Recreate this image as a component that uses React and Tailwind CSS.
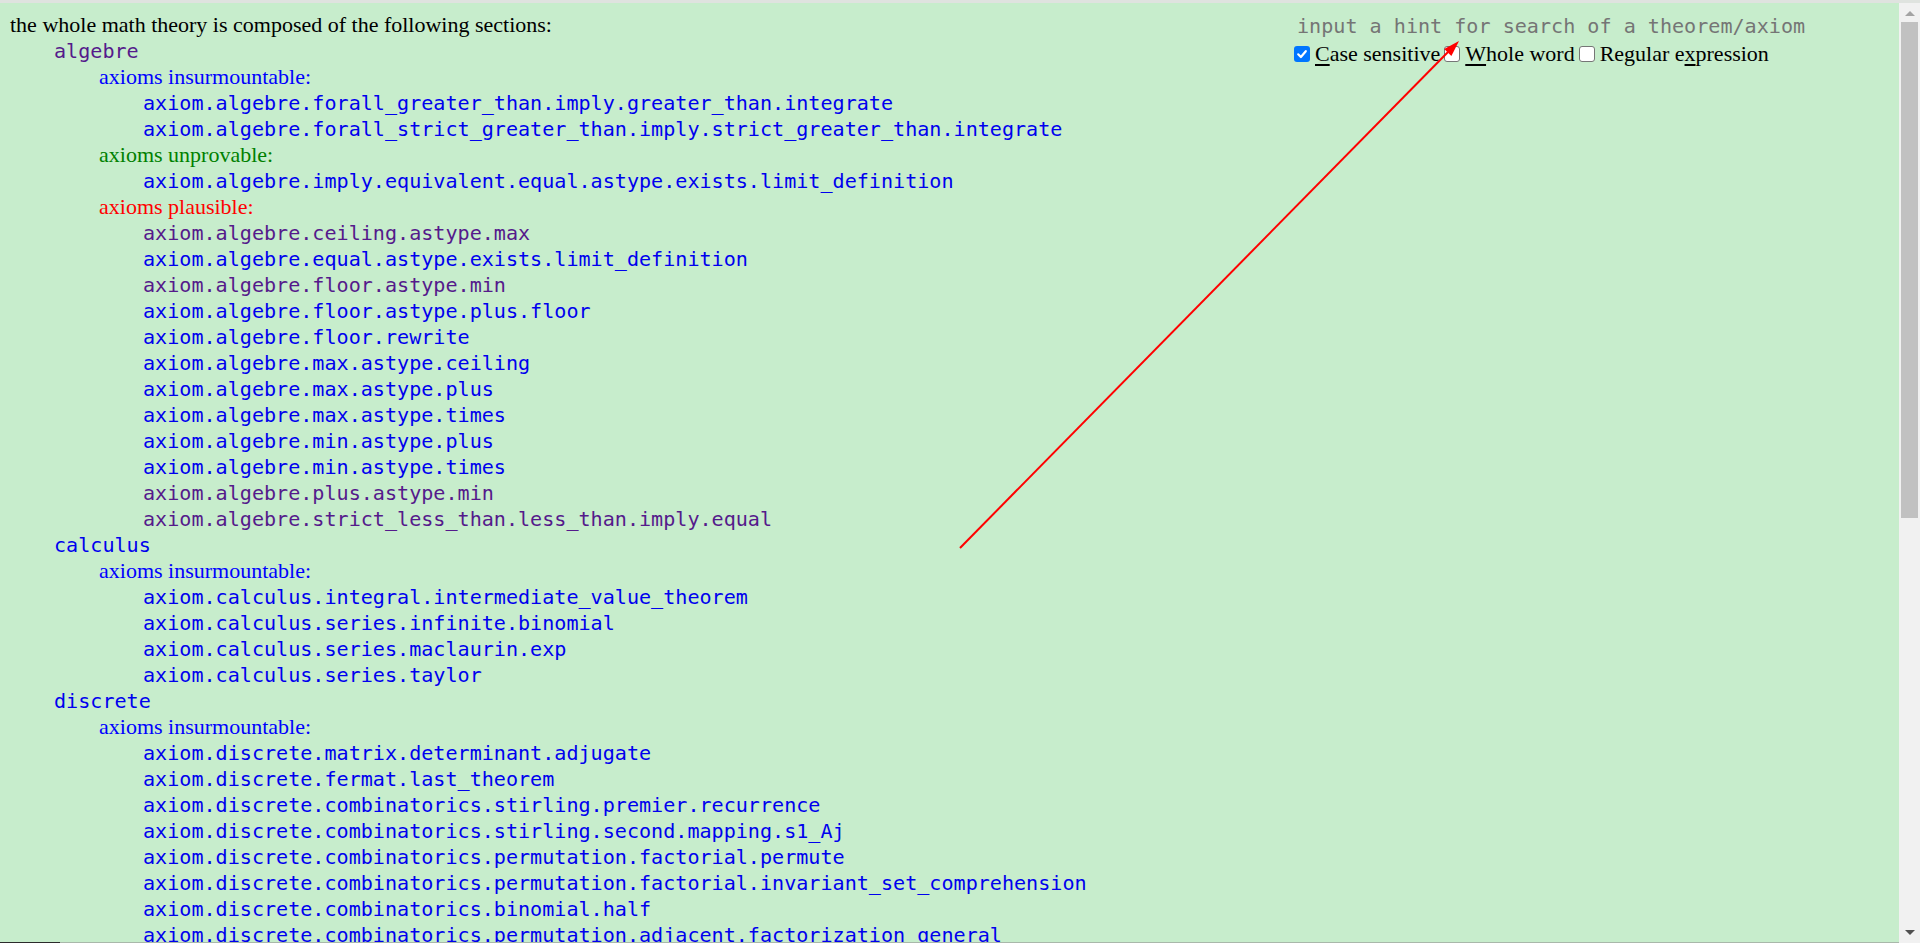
import React from "react";

const MONO = "font-['DejaVu_Sans_Mono',monospace] text-[20.1px]";
const SERIF = "font-['Liberation_Serif',serif] text-[22px]";

const BLUE = "text-[#0000ee]";
const PURPLE = "text-[#551a8b]";

const sections = [
  {
    name: "algebre",
    visited: true,
    groups: [
      {
        label: "axioms insurmountable:",
        color: "text-[#0000ff]",
        items: [
          ["axiom.algebre.forall_greater_than.imply.greater_than.integrate", false],
          ["axiom.algebre.forall_strict_greater_than.imply.strict_greater_than.integrate", false],
        ],
      },
      {
        label: "axioms unprovable:",
        color: "text-[#008000]",
        items: [["axiom.algebre.imply.equivalent.equal.astype.exists.limit_definition", false]],
      },
      {
        label: "axioms plausible:",
        color: "text-[#ff0000]",
        items: [
          ["axiom.algebre.ceiling.astype.max", true],
          ["axiom.algebre.equal.astype.exists.limit_definition", false],
          ["axiom.algebre.floor.astype.min", true],
          ["axiom.algebre.floor.astype.plus.floor", false],
          ["axiom.algebre.floor.rewrite", false],
          ["axiom.algebre.max.astype.ceiling", false],
          ["axiom.algebre.max.astype.plus", false],
          ["axiom.algebre.max.astype.times", false],
          ["axiom.algebre.min.astype.plus", false],
          ["axiom.algebre.min.astype.times", false],
          ["axiom.algebre.plus.astype.min", true],
          ["axiom.algebre.strict_less_than.less_than.imply.equal", true],
        ],
      },
    ],
  },
  {
    name: "calculus",
    visited: false,
    groups: [
      {
        label: "axioms insurmountable:",
        color: "text-[#0000ff]",
        items: [
          ["axiom.calculus.integral.intermediate_value_theorem", false],
          ["axiom.calculus.series.infinite.binomial", false],
          ["axiom.calculus.series.maclaurin.exp", false],
          ["axiom.calculus.series.taylor", false],
        ],
      },
    ],
  },
  {
    name: "discrete",
    visited: false,
    groups: [
      {
        label: "axioms insurmountable:",
        color: "text-[#0000ff]",
        items: [
          ["axiom.discrete.matrix.determinant.adjugate", false],
          ["axiom.discrete.fermat.last_theorem", false],
          ["axiom.discrete.combinatorics.stirling.premier.recurrence", false],
          ["axiom.discrete.combinatorics.stirling.second.mapping.s1_Aj", false],
          ["axiom.discrete.combinatorics.permutation.factorial.permute", false],
          ["axiom.discrete.combinatorics.permutation.factorial.invariant_set_comprehension", false],
          ["axiom.discrete.combinatorics.binomial.half", false],
          ["axiom.discrete.combinatorics.permutation.adjacent.factorization_general", false],
        ],
      },
    ],
  },
];

function Box({ checked }) {
  if (checked) {
    return (
      <span className="inline-flex w-[16px] h-[16px] shrink-0 rounded-[3px] bg-[#0075ff] items-center justify-center ml-[4px] mr-[5px]">
        <svg width="12" height="12" viewBox="0 0 12 12">
          <path d="M2.2 6.3 L4.9 9 L9.8 3.2" stroke="white" strokeWidth="2.2" fill="none" strokeLinecap="round" strokeLinejoin="round" />
        </svg>
      </span>
    );
  }
  return (
    <span className="inline-block w-[16px] h-[16px] shrink-0 rounded-[3px] border border-[#767676] bg-white ml-[4px] mr-[5px]" />
  );
}

export default function App() {
  return (
    <div className="relative w-full h-[943px] overflow-hidden flex flex-col bg-[#c7edcc]">
      <div className="h-[3px] w-full bg-[#dfe3df] shrink-0" />
      <div className="flex flex-1 min-h-0">
        <div className="flex flex-col flex-1 min-w-0">
          <div className="flex-1 min-h-0 overflow-hidden pl-[10px] pt-[9px]">
            <div className={`${SERIF} leading-[26px] h-[26px] text-black whitespace-nowrap`}>
              the whole math theory is composed of the following sections:
            </div>
            <div className="pl-[44px]">
              {sections.map((s) => (
                <div key={s.name}>
                  <div className={`${MONO} leading-[26px] h-[26px] whitespace-nowrap ${s.visited ? PURPLE : BLUE}`}>
                    {s.name}
                  </div>
                  <div className="pl-[45px]">
                    {s.groups.map((g, gi) => (
                      <div key={gi}>
                        <div className={`${SERIF} leading-[26px] h-[26px] whitespace-nowrap ${g.color}`}>{g.label}</div>
                        <div className="pl-[44px]">
                          {g.items.map(([t, v]) => (
                            <div key={t} className={`${MONO} leading-[26px] h-[26px] whitespace-nowrap ${v ? PURPLE : BLUE}`}>
                              {t}
                            </div>
                          ))}
                        </div>
                      </div>
                    ))}
                  </div>
                </div>
              ))}
            </div>
          </div>
          <div className="h-[1px] flex shrink-0">
            <div className="w-[60px] bg-[#2b2b2b]" />
            <div className="flex-1 bg-[#a9b8aa]" />
          </div>
        </div>
        {/* vertical scrollbar */}
        <div className="w-[21px] shrink-0 bg-[#f1f1f1] flex flex-col">
          <div className="h-[19px] flex items-center justify-center">
            <svg width="10" height="6" viewBox="0 0 10 6">
              <path d="M0 6 L5 1 L10 6 Z" fill="#a3a3a3" />
            </svg>
          </div>
          <div className="h-[496px] mx-[2px] bg-[#c1c1c1]" />
          <div className="flex-1" />
          <div className="h-[20px] flex items-center justify-center">
            <svg width="10" height="6" viewBox="0 0 10 6">
              <path d="M0 0 L10 0 L5 5 Z" fill="#505050" />
            </svg>
          </div>
        </div>
      </div>

      {/* fixed search panel */}
      <div className="absolute top-[12px] left-[1290px] flex flex-col">
        <input
          className={`${MONO} h-[28px] w-[600px] ml-[7px] p-0 bg-transparent border-0 outline-none text-black placeholder:text-[#757575]`}
          placeholder="input a hint for search of a theorem/axiom"
        />
        <div className={`${SERIF} mt-[1px] h-[26px] leading-[26px] flex items-center text-black whitespace-nowrap`}>
          <Box checked />
          <span>
            <span className="underline underline-offset-[3px]">C</span>ase sensitive
          </span>
          <Box />
          <span>
            <span className="underline underline-offset-[3px]">W</span>hole word
          </span>
          <Box />
          <span>
            Regular e<span className="underline underline-offset-[3px]">x</span>pression
          </span>
        </div>
      </div>

      {/* annotation arrow */}
      <svg className="absolute left-0 top-0 pointer-events-none" width="1920" height="943" viewBox="0 0 1920 943">
        <line x1="960" y1="548" x2="1448" y2="52" stroke="#ff0000" strokeWidth="2" />
        <polygon points="1459,41 1451.4,55.9 1444.2,48.9" fill="#ff0000" />
      </svg>
    </div>
  );
}
